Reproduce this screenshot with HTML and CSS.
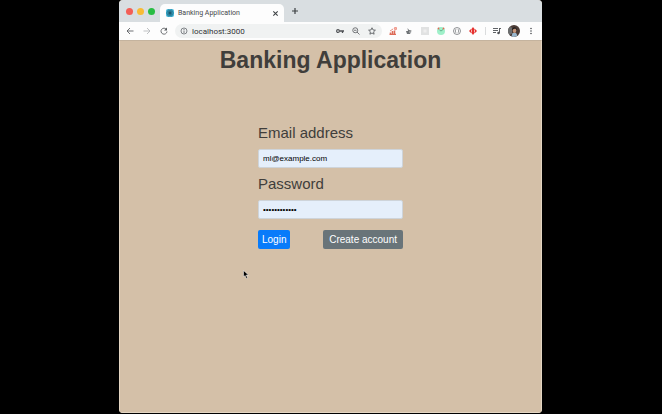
FILE: index.html
```html
<!DOCTYPE html>
<html lang="en">
<head>
    <meta charset="UTF-8">
    <meta name="viewport" content="width=device-width, initial-scale=1.0">
    <title>Banking Application</title>
    <link rel="stylesheet" href="styles.css">
</head>
<body>
    <div class="window">
        <!-- Tabs -->
        <div class="tab-strip">
            <div class="lights">
                <span class="light red"></span>
                <span class="light yellow"></span>
                <span class="light green"></span>
            </div>
            <div class="tab">
                <svg class="favicon" viewBox="0 0 16 16">
                    <rect width="16" height="16" rx="4" fill="#43b5d5"/>
                    <g fill="none" stroke="#1f6580" stroke-width="1.2">
                        <ellipse cx="8" cy="8" rx="7" ry="3"/>
                        <ellipse cx="8" cy="8" rx="7" ry="3" transform="rotate(60 8 8)"/>
                        <ellipse cx="8" cy="8" rx="7" ry="3" transform="rotate(120 8 8)"/>
                    </g>
                    <circle cx="8" cy="8" r="2" fill="#123c4d"/>
                </svg>
                <span class="tab-title">Banking Application</span>
                <button class="icon-button" aria-label="Close tab">
                    <svg class="small-icon" viewBox="0 0 16 16"><path d="M3 3l10 10M13 3L3 13" stroke="#3c4043" stroke-width="2.4"/></svg>
                </button>
            </div>
            <button class="icon-button" aria-label="New tab">
                <svg class="icon" viewBox="0 0 16 16"><path d="M8 2v12M2 8h12" stroke="#3c4043" stroke-width="2.4"/></svg>
            </button>
        </div>

        <!-- Toolbar -->
        <div class="toolbar">
            <div class="nav">
                <button class="icon-button" aria-label="Back">
                    <svg class="icon" viewBox="0 0 16 16" fill="none" stroke="#55585c" stroke-width="1.7"><path d="M15 8H2M8 2L2 8l6 6"/></svg>
                </button>
                <button class="icon-button" aria-label="Forward">
                    <svg class="icon" viewBox="0 0 16 16" fill="none" stroke="#b4b6b8" stroke-width="1.7"><path d="M1 8h13M8 2l6 6-6 6"/></svg>
                </button>
                <button class="icon-button" aria-label="Reload">
                    <svg class="icon" viewBox="0 0 16 16"><path d="M13 5a6 6 0 1 0 1 4" fill="none" stroke="#55585c" stroke-width="1.7"/><path d="M14 1v6H8z" fill="#55585c"/></svg>
                </button>
            </div>
            <div class="address-bar">
                <svg class="icon" viewBox="0 0 16 16"><circle cx="8" cy="8" r="6" fill="none" stroke="#5f6368" stroke-width="1.5"/><path d="M8 7v5M8 4v2" stroke="#5f6368" stroke-width="1.6"/></svg>
                <input class="address" type="text" aria-label="Address" value="localhost:3000">
                <div class="address-icons">
                    <button class="icon-button" aria-label="Saved passwords">
                        <svg class="icon" viewBox="0 0 16 16"><circle cx="4" cy="8" r="2.8" fill="none" stroke="#4d5054" stroke-width="2.2"/><path d="M7 8h9M13 8v4" stroke="#4d5054" stroke-width="2.6"/></svg>
                    </button>
                    <button class="icon-button" aria-label="Zoom">
                        <svg class="icon" viewBox="0 0 16 16" fill="none" stroke="#55585c" stroke-width="1.6"><circle cx="6.5" cy="6.5" r="5"/><path d="M10 10l5 5M4 6.5h5"/></svg>
                    </button>
                    <button class="icon-button" aria-label="Bookmark">
                        <svg class="icon" viewBox="0 0 16 16"><path d="M8 1.5l2 4.4 4.8.5-3.6 3.2 1 4.8L8 12l-4.2 2.4 1-4.8-3.6-3.2 4.8-.5z" fill="none" stroke="#55585c" stroke-width="1.7"/></svg>
                    </button>
                </div>
            </div>
            <div class="extensions">
                <svg class="icon" viewBox="0 0 16 16"><path d="M1 15h13M3 15v-4M7 15V8M11 15V7" stroke="#dd6b58" stroke-width="3"/><path d="M2 8l6-4" stroke="#dd6b58" stroke-width="1.5"/><circle cx="13" cy="3" r="2.5" fill="#f5b3a8" stroke="#e2503f"/></svg>
                <svg class="icon" viewBox="0 0 16 16"><path d="M5 2l3 4 5 1-1 3-2 4H4L2 8h4z" fill="#707477"/><path d="M8 10h5" stroke="#d5d7d8" stroke-width="1.5"/></svg>
                <svg class="icon" viewBox="0 0 16 16"><rect width="16" height="16" fill="#e1e2e2"/><path d="M5 5h6v6H5z" fill="#eeeeee"/></svg>
                <svg class="icon" viewBox="0 0 16 16"><circle cx="8" cy="8" r="8" fill="#9ff0c9"/><path d="M5 6l3 2 4-3" fill="none" stroke="#4f9c77" stroke-width="1.5"/><circle cx="3" cy="3" r="1.8" fill="#e46554"/><circle cx="13" cy="3" r="1.8" fill="#e46554"/></svg>
                <svg class="icon" viewBox="0 0 16 16" fill="none" stroke="#606468"><circle cx="8" cy="8" r="7" stroke-width="1.4"/><path d="M6.5 4.5C4 4.5 6 8 4 8c2 0 0 3.5 2.5 3.5M9.5 4.5C12 4.5 10 8 12 8c-2 0 0 3.5-2.5 3.5" stroke-width="1.3"/></svg>
                <svg class="icon" viewBox="0 0 16 16"><path d="M0 8l4-4h1l3-4 3 4h1l4 4-4 4h-1l-3 4-3-4H4z" fill="#e5302d"/><path d="M5 5v6M11 5v6" stroke="#fff" stroke-width="1.3"/></svg>
            </div>
            <div class="profile">
                <button class="icon-button" aria-label="Media">
                    <svg class="icon" viewBox="0 0 16 16"><path d="M0 3h10M0 7h10M0 11h6M13 3v9M12 3h4" stroke="#4d5054" stroke-width="1.8"/><circle cx="11" cy="12" r="2.5" fill="#4d5054"/></svg>
                </button>
                <button class="icon-button" aria-label="Profile">
                    <svg class="avatar" viewBox="0 0 24 24">
                        <circle cx="12" cy="12" r="12" fill="#4a3b36"/>
                        <path d="M3 4a12 12 0 0 0 0 16l5-3V5z" fill="#6b6d6e"/>
                        <path d="M7 23l2-7h7l3 5a12 12 0 0 1-12 2z" fill="#98b6cc"/>
                        <ellipse cx="13" cy="11" rx="3.5" ry="5" fill="#c49478"/>
                        <path d="M8 11c0-9 10-9 10 0l-3-4-4 1z" fill="#211d1d"/>
                    </svg>
                </button>
                <button class="icon-button" aria-label="Menu">
                    <svg class="icon" viewBox="0 0 16 16" fill="#4d5054"><circle cx="8" cy="3" r="1.6"/><circle cx="8" cy="8" r="1.6"/><circle cx="8" cy="13" r="1.6"/></svg>
                </button>
            </div>
        </div>

        <!-- Login page -->
        <main class="page">
            <h1>Banking Application</h1>
            <form class="login-form">
                <label for="email">Email address</label>
                <input class="form-control" type="email" id="email" value="ml@example.com">
                <label for="password">Password</label>
                <input class="form-control" type="password" id="password" value="banking12345">
                <div class="actions">
                    <button class="btn btn-primary" type="button">Login</button>
                    <button class="btn btn-secondary" type="button">Create account</button>
                </div>
            </form>
            <svg class="cursor" viewBox="0 0 12 18"><path d="M1 1v13l3-3 2.500 6 2.500-1-2.500-6H11z" fill="#000" stroke="#fff"/></svg>
        </main>
    </div>
</body>
</html>
```

FILE: styles.css
```css
* {
    box-sizing: border-box;
}
body {
    margin: 0;
    padding: 0 120px 1px 119px;
    min-height: 100vh;
    display: flex;
    background-color: #000;
    font-family: "Liberation Sans", Arial, sans-serif;
}
.window {
    flex: 1;
    min-width: 0;
    display: flex;
    flex-direction: column;
    border-radius: 4px;
    overflow: hidden;
    background-color: #d4c0a8;
}
button {
    font-family: inherit;
    cursor: pointer;
}
.icon-button {
    display: flex;
    padding: 0;
    border: none;
    background: none;
}
.icon {
    width: 8px;
    height: 8px;
    flex: none;
}
.small-icon {
    width: 7px;
    height: 7px;
}

/* Tabs */
.tab-strip {
    display: flex;
    align-items: center;
    height: 22px;
    padding-left: 7px;
    background-color: #d9dee1;
}
.lights {
    display: flex;
    gap: 4px;
    width: 34px;
}
.light {
    width: 7px;
    height: 7px;
    border-radius: 50%;
}
.red {
    background-color: #f35e56;
}
.yellow {
    background-color: #f8bb35;
}
.green {
    background-color: #28bd43;
}
.tab {
    display: flex;
    align-items: center;
    gap: 4px;
    width: 124px;
    height: 18px;
    margin-right: 7px;
    padding: 0 5px 0 6px;
    align-self: flex-end;
    border-radius: 5px 5px 0 0;
    background-color: #fdfdfd;
}
.favicon {
    width: 8px;
    height: 8px;
}
.tab-title {
    flex: 1;
    font-family: Roboto, sans-serif;
    font-size: 7px;
    color: #45484b;
}

/* Toolbar */
.toolbar {
    display: flex;
    align-items: center;
    height: 18px;
    padding: 0 7px;
    background-color: #fdfdfd;
}
.nav {
    display: flex;
    gap: 9px;
    margin-right: 7px;
}
.address-bar {
    flex: 1;
    min-width: 0;
    display: flex;
    align-items: center;
    gap: 4px;
    height: 14px;
    padding: 0 6px 0 5px;
    border-radius: 7px;
    background-color: #f0f2f2;
}
.address {
    flex: 1;
    min-width: 0;
    padding: 0;
    border: none;
    background: none;
    font-family: Roboto, sans-serif;
    font-size: 8px;
    color: #303336;
}
.address-icons {
    display: flex;
    gap: 8px;
}
.extensions {
    display: flex;
    gap: 8px;
    margin-left: 7px;
    padding-right: 8px;
    border-right: 1px solid #dadcdd;
}
.profile {
    display: flex;
    align-items: center;
    gap: 7px;
    margin-left: 7px;
}
.avatar {
    width: 12px;
    height: 12px;
}

/* Login page */
.page {
    position: relative;
    flex: 1;
    border: 1px solid #e3d5c2;
    border-top-color: #c4b39e;
    color: #403e3b;
}
h1 {
    margin: 5px 0 50px;
    font-size: 23px;
    line-height: 28px;
    font-weight: bold;
    text-align: center;
}
.login-form {
    width: 145px;
    margin: 0 auto;
}
label {
    display: block;
    margin-bottom: 7px;
    font-size: 15px;
    line-height: 18px;
}
.form-control {
    display: block;
    width: 100%;
    height: 19px;
    margin-bottom: 7px;
    padding: 0 4px;
    border: 1px solid #ced4da;
    border-radius: 2px;
    background-color: #e5effb;
    font-family: inherit;
    font-size: 8px;
    color: #000;
}
.actions {
    display: flex;
    justify-content: space-between;
    margin-top: 11px;
}
.btn {
    height: 19px;
    padding: 0 5px;
    border: none;
    border-radius: 2px;
    font-size: 10px;
    color: #fff;
}
.btn-primary {
    padding: 0 4px;
    background-color: #087bfa;
}
.btn-secondary {
    padding: 0 6px;
    background-color: #697479;
}
.cursor {
    position: absolute;
    top: 229px;
    left: 123px;
    width: 6px;
    height: 9px;
}
```
